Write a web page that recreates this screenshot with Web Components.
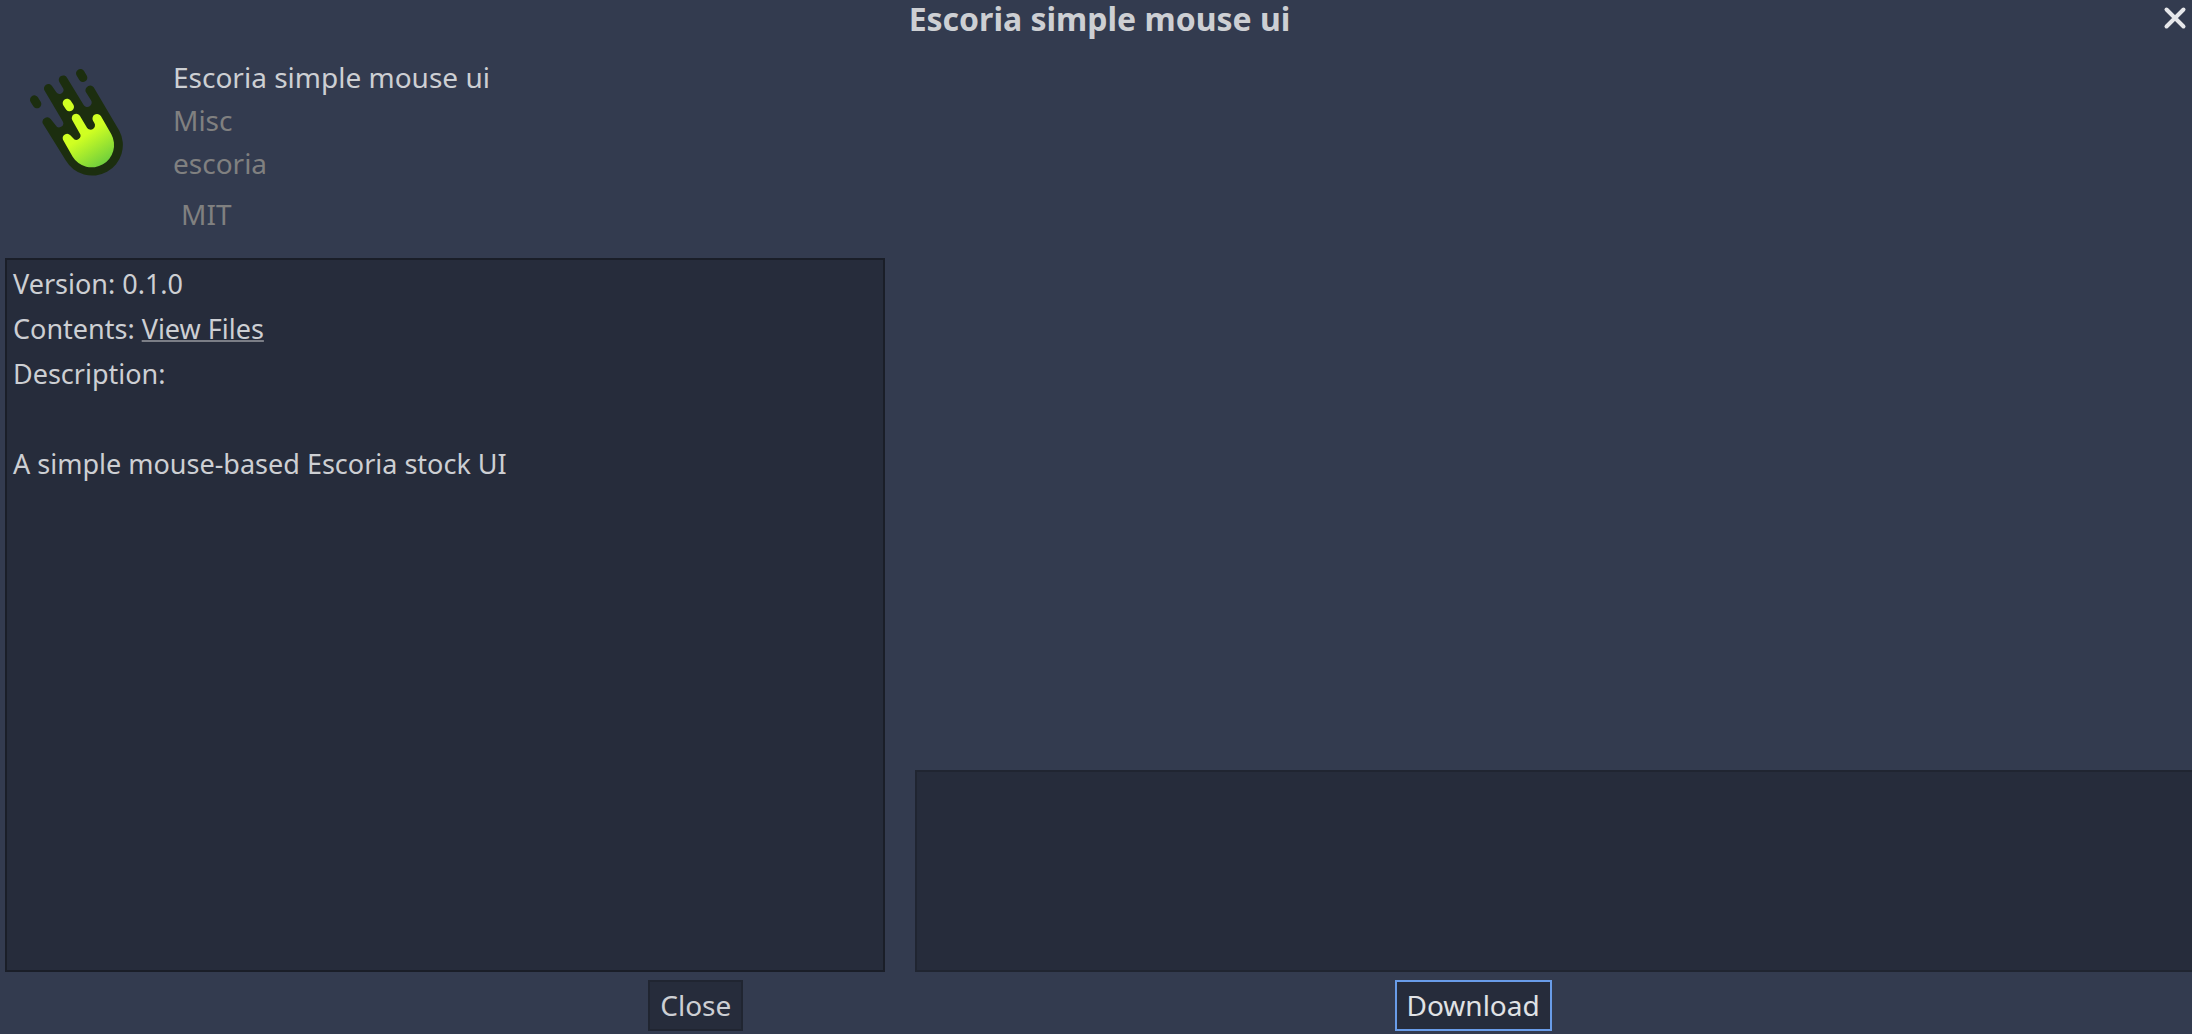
<!DOCTYPE html>
<html lang="en">
<head>
<meta charset="utf-8">
<title>Escoria simple mouse ui</title>
<style>
  body {
    margin: 0;
    --base: #333b4f;
    --panel: #262c3b;
    --edge: #1a1e28;
    --edge-soft: #202531;
    --accent: #699ce8;
    --text: #cdcfd3;
    --muted: #808080;
    background: var(--base);
    color: var(--text);
    font: 28px/45px "Noto Sans", "Open Sans", sans-serif;
  }
</style>
</head>
<body>
<asset-dialog heading="Escoria simple mouse ui">
  <asset-summary slot="details" name="Escoria simple mouse ui" category="Misc" author="escoria" license="MIT"></asset-summary>
  <text-panel slot="details">
    <div>Version: 0.1.0</div>
    <div>Contents: <text-link>View Files</text-link></div>
    <div>Description:</div>
    <div><br></div>
    <div>A simple mouse-based Escoria stock UI</div>
  </text-panel>
  <preview-strip slot="previews"></preview-strip>
  <dialog-button slot="actions">Close</dialog-button>
  <dialog-button slot="actions" primary>Download</dialog-button>
</asset-dialog>

<script>
const define = (name, render) => customElements.define(name, class extends HTMLElement {
  connectedCallback() {
    if (this.shadowRoot) return;
    this.attachShadow({ mode: "open" }).innerHTML = render(this);
  }
});

define("close-icon", () => `
  <style>
    :host { display: flex; }
    button { display: flex; padding: 0; border: 0; background: none; color: #e6e7ea; }
  </style>
  <button type="button" aria-label="Close dialog">
    <svg width="24" height="24" viewBox="0 0 24 24" fill="none" stroke="currentColor" stroke-width="4" stroke-linecap="round"><path d="M3.5 3.5 20.5 20.5M20.5 3.5 3.5 20.5"/></svg>
  </button>`);

define("asset-icon", () => `
  <style>:host { display: block; flex: none; } svg { display: block; }</style>
  <svg width="120" height="130" viewBox="0 0 360 390" aria-hidden="true">
    <defs>
      <linearGradient id="glow" gradientUnits="userSpaceOnUse" x1="195" y1="240" x2="252" y2="325">
        <stop offset="0" stop-color="#d0ff22"/><stop offset="1" stop-color="#70cf3c"/>
      </linearGradient>
    </defs>
    <path fill="#1c2e0f" d="M68 205 L137 316 A92 92 0 0 0 298 227 L221 97 A14 14 0 0 0 197 110 L213 136 A13 13 0 0 1 191 150 L141 68 A13 13 0 0 0 118 81 L130 101 A12 12 0 0 1 109 112 L96 93 A13 13 0 0 0 74 107 L128 199 A12 12 0 0 1 107 211 L92 192 A14 14 0 0 0 68 205Z"/>
    <g fill="none" stroke-linecap="round" stroke-width="26">
      <path stroke="#1c2e0f" d="M43 134 L51 147 M181 55 L189 68"/>
      <path stroke="#d0ff22" d="M141 144 L149 156"/>
    </g>
    <path fill="url(#glow)" d="M129 254 L158 305 A67 67 0 0 0 274 238 L243 184 A13 13 0 0 0 219 197 L223 204 A12 12 0 0 1 201 218 L180 183 A13 13 0 0 0 157 196 L179 235 A12 12 0 0 1 159 249 L151 241 A13 13 0 0 0 129 254Z"/>
  </svg>`);

define("asset-summary", el => `
  <style>
    :host { display: flex; gap: 33px; padding: 17px 0 18px 15px; line-height: 43px; }
    .rows { display: flex; flex-direction: column; align-items: flex-start; padding-top: 1px; }
    a { color: inherit; text-decoration: none; }
    a + a { color: var(--muted); }
    .license { margin-top: 4px; padding-left: 8px; line-height: 51px; color: var(--muted); }
  </style>
  <asset-icon></asset-icon>
  <div class="rows">
    <a href="#asset">${el.getAttribute("name")}</a>
    <a href="#category">${el.getAttribute("category")}</a>
    <a href="#author">${el.getAttribute("author")}</a>
    <span class="license">${el.getAttribute("license")}</span>
  </div>`);

define("text-link", () => `
  <style>
    :host { display: inline; }
    a { color: inherit; text-decoration: underline 2px #7b7e86; text-underline-offset: 1px; text-decoration-skip-ink: none; }
  </style>
  <a href="#files"><slot></slot></a>`);

define("text-panel", () => `
  <style>
    :host { display: block; flex: 1; padding: 1px 6px; background: var(--panel); border: 2px solid var(--edge); font-size: 27px; }
  </style>
  <slot></slot>`);

define("preview-strip", () => `
  <style>
    :host { display: block; box-sizing: border-box; height: 202px; background: var(--panel); border: 2px solid var(--edge-soft); border-right: 0; }
  </style>
  <slot></slot>`);

define("dialog-button", () => `
  <style>
    :host { display: block; }
    button { display: block; padding: 0 10px; border: 2px solid var(--edge-soft); background: var(--panel); color: inherit; font: inherit; line-height: 47px; }
    :host([primary]) button { border-color: var(--accent); color: #e0e2e5; }
  </style>
  <button type="button"><slot></slot></button>`);

define("asset-dialog", el => `
  <style>
    :host { display: flex; flex-direction: column; min-height: 100vh; }
    header { display: grid; grid-template-columns: 36px 1fr 29px; align-items: start; line-height: 38px; }
    h1 { grid-column: 2; margin: 0; font-size: 32px; line-height: 38px; font-weight: 700; text-align: center; }
    close-icon { padding-top: 6px; }
    main { flex: 1; display: grid; grid-template-columns: 20fr 29fr; gap: 30px; padding-left: 5px; }
    section { display: flex; flex-direction: column; min-width: 0; }
    .previews { justify-content: flex-end; }
    footer { display: flex; justify-content: space-evenly; gap: 11px; padding: 8px 0 3px 8px; }
  </style>
  <header><h1>${el.getAttribute("heading")}</h1><close-icon></close-icon></header>
  <main>
    <section><slot name="details"></slot></section>
    <section class="previews"><slot name="previews"></slot></section>
  </main>
  <footer><slot name="actions"></slot></footer>`);
</script>
</body>
</html>
